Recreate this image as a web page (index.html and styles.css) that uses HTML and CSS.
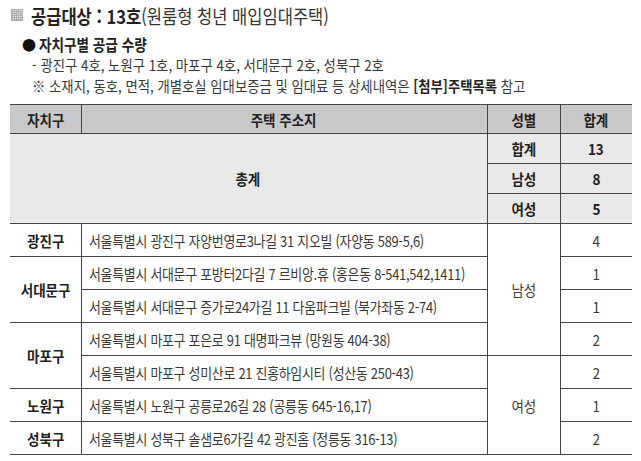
FILE: index.html
```html
<!DOCTYPE html>
<html lang="ko">
<head>
<meta charset="utf-8">
<link rel="stylesheet" href="styles.css">
</head>
<body>
<div class="page">
  <div class="title"><span class="shade"></span><span class="t"><b>공급대상 : 13호</b>(원룸형 청년 매입임대주택)</span></div>
  <div class="sub"><span class="bullet">●</span><span class="t">자치구별 공급 수량</span></div>
  <div class="note"><span class="t">- 광진구 4호, 노원구 1호, 마포구 4호, 서대문구 2호, 성북구 2호</span></div>
  <div class="note"><span class="t">※ 소재지, 동호, 면적, 개별호실 임대보증금 및 임대료 등 상세내역은 <b>[첨부]주택목록</b> 참고</span></div>
  <table class="tbl">
    <colgroup><col class="w1"><col class="w2"><col class="w3"><col class="w4"></colgroup>
    <tr class="head">
      <th class="c1"><span class="tc">자치구</span></th>
      <th><span class="tc">주택 주소지</span></th>
      <th><span class="tc">성별</span></th>
      <th class="c4"><span class="tc">합계</span></th>
    </tr>
    <tr class="sum">
      <td class="c1 gray strong" colspan="2" rowspan="3"><span class="tc">총계</span></td>
      <td class="gray strong"><span class="tc">합계</span></td>
      <td class="c4 gray strong"><span class="tc">13</span></td>
    </tr>
    <tr class="sum">
      <td class="gray strong"><span class="tc">남성</span></td>
      <td class="c4 gray strong"><span class="tc">8</span></td>
    </tr>
    <tr class="sum">
      <td class="gray strong"><span class="tc">여성</span></td>
      <td class="c4 gray strong"><span class="tc">5</span></td>
    </tr>
    <tr class="row">
      <td class="c1 strong"><span class="tc">광진구</span></td>
      <td class="addr"><span class="t">서울특별시 광진구 자양번영로3나길 31 지오빌 (자양동 589-5,6)</span></td>
      <td rowspan="4"><span class="tc">남성</span></td>
      <td class="c4"><span class="tc">4</span></td>
    </tr>
    <tr class="row">
      <td class="c1 strong" rowspan="2"><span class="tc">서대문구</span></td>
      <td class="addr"><span class="t">서울특별시 서대문구 포방터2다길 7 르비앙.휴 (홍은동 8-541,542,1411)</span></td>
      <td class="c4"><span class="tc">1</span></td>
    </tr>
    <tr class="row">
      <td class="addr"><span class="t">서울특별시 서대문구 증가로24가길 11 다움파크빌 (북가좌동 2-74)</span></td>
      <td class="c4"><span class="tc">1</span></td>
    </tr>
    <tr class="row">
      <td class="c1 strong" rowspan="2"><span class="tc">마포구</span></td>
      <td class="addr"><span class="t">서울특별시 마포구 포은로 91 대명파크뷰 (망원동 404-38)</span></td>
      <td class="c4"><span class="tc">2</span></td>
    </tr>
    <tr class="row">
      <td class="addr"><span class="t">서울특별시 마포구 성미산로 21 진홍하임시티 (성산동 250-43)</span></td>
      <td rowspan="3"><span class="tc">여성</span></td>
      <td class="c4"><span class="tc">2</span></td>
    </tr>
    <tr class="row">
      <td class="c1 strong"><span class="tc">노원구</span></td>
      <td class="addr"><span class="t">서울특별시 노원구 공릉로26길 28 (공릉동 645-16,17)</span></td>
      <td class="c4"><span class="tc">1</span></td>
    </tr>
    <tr class="row">
      <td class="c1 strong"><span class="tc">성북구</span></td>
      <td class="addr"><span class="t">서울특별시 성북구 솔샘로6가길 42 광진홈 (정릉동 316-13)</span></td>
      <td class="c4"><span class="tc">2</span></td>
    </tr>
  </table>
</div>
</body>
</html>
```

FILE: styles.css
```css
body {
  margin: 0;
  background: #ffffff;
  font-family: "Noto Sans CJK KR", "Noto Sans", sans-serif;
  color: #3a3a3a;
}

.page {
  padding: 0 9px 0 10px;
}

.t {
  display: inline-block;
  white-space: nowrap;
  transform: scaleX(0.89);
  transform-origin: 0 50%;
}

.tc {
  display: inline-block;
  white-space: nowrap;
  transform: scaleX(0.9);
  transform-origin: 50% 50%;
}

b {
  font-weight: 700;
  color: #222;
}

.title {
  height: 30px;
  display: flex;
  align-items: center;
  font-size: 19px;
  color: #333;
}

.title .t {
  transform: scaleX(0.87);
}

.shade {
  flex: none;
  width: 12px;
  height: 12px;
  margin: 0 8px 0 1px;
  border: 1px solid #b0b0b0;
  box-sizing: border-box;
  background:
    repeating-linear-gradient(90deg, rgba(150,150,150,.55) 0 1px, transparent 1px 2px),
    repeating-linear-gradient(0deg, #b8b8b8 0 1px, #e6e6e6 1px 2px);
}

.sub {
  margin-top: 3px;
  height: 21px;
  display: flex;
  align-items: center;
  padding-left: 12px;
  font-size: 16px;
  font-weight: 700;
  color: #222;
}

.sub .t {
  transform: scaleX(0.85);
}

.bullet {
  font-size: 14px;
  margin-right: 3px;
  color: #111;
}

.note {
  height: 21px;
  line-height: 21px;
  padding-left: 22px;
  font-size: 15px;
  color: #383838;
}

.tbl {
  margin-top: 8px;
  width: 622px;
  border-collapse: collapse;
  table-layout: fixed;
  font-size: 15px;
}

.w1 { width: 71px; }
.w2 { width: 406px; }
.w3 { width: 73px; }
.w4 { width: 72px; }

.tbl th,
.tbl td {
  border: 1px solid #444444;
  padding: 0;
  text-align: center;
  vertical-align: middle;
  overflow: hidden;
}

.tbl .c1 { border-left: none; }
.tbl .c4 { border-right: none; }

.tbl th {
  background: #c9c9cb;
  font-weight: 700;
  color: #222;
}

.head { height: 29px; }
.sum { height: 30px; }
.row { height: 33px; }

.tbl .gray { background: #e9e9ea; }

.tbl .strong {
  font-weight: 700;
  color: #222;
}

.tbl .addr {
  text-align: left;
  padding-left: 7px;
  font-size: 15px;
  letter-spacing: -0.3px;
  color: #383838;
}

.tbl .addr .t {
  transform: scaleX(0.86);
}
```
